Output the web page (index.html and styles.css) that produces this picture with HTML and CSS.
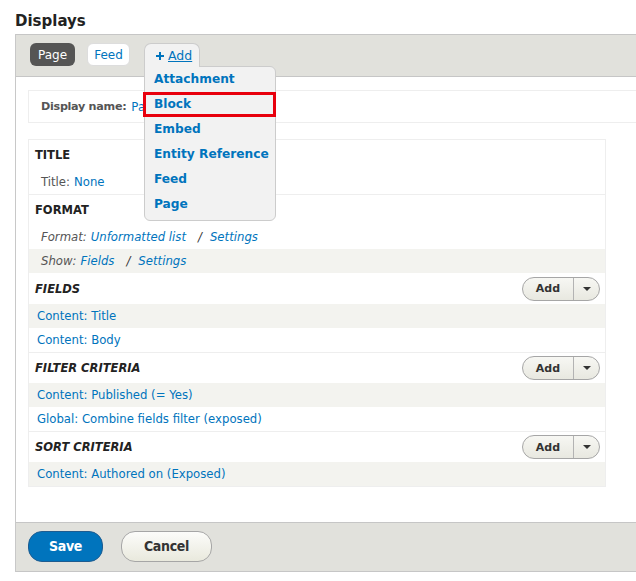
FILE: index.html
```html
<!DOCTYPE html>
<html>
<head>
<meta charset="utf-8">
<link rel="stylesheet" href="styles.css">
</head>
<body>
<h2 class="page-title">Displays</h2>
<div class="panel">
  <div class="tabbar">
    <span class="tab tab-active">Page</span>
    <span class="tab tab-link">Feed</span>
    <div class="add-wrap">
      <span class="tab tab-add"><svg class="plus" viewBox="0 0 8 8" width="8" height="8"><path d="M3 0h2v3h3v2H5v3H3V5H0V3h3z" fill="#0074bd"/></svg><span class="add-text">Add</span></span>
      <ul class="add-menu">
        <li>Attachment</li>
        <li class="selected">Block</li>
        <li>Embed</li>
        <li>Entity Reference</li>
        <li>Feed</li>
        <li>Page</li>
      </ul>
    </div>
  </div>
  <div class="content">
    <div class="display-name"><span class="dn-label">Display name:</span> <span class="link">Page</span></div>
    <div class="bucket-box">
      <div class="bucket">
        <div class="bucket-head"><h3 class="h-up">TITLE</h3></div>
        <div class="row"><span class="lbl">Title:</span> <span class="link">None</span></div>
      </div>
      <div class="bucket no-border">
        <div class="bucket-head"><h3 class="h-up">FORMAT</h3></div>
        <div class="row it"><span class="lbl">Format:</span> <span class="link">Unformatted list</span><span class="sep">/</span><span class="link">Settings</span></div>
        <div class="row it odd"><span class="lbl">Show:</span> <span class="link">Fields</span><span class="sep">/</span><span class="link">Settings</span></div>
      </div>
      <div class="bucket">
        <div class="bucket-head tall"><h3 class="h-it">FIELDS</h3>
          <div class="split"><span class="split-main">Add</span><span class="split-arrow"><svg viewBox="0 0 8 4" width="8" height="4"><path d="M0 0h8L4 4z" fill="#333"/></svg></span></div>
        </div>
        <div class="row link-row odd"><span class="link">Content: Title</span></div>
        <div class="row link-row"><span class="link">Content: Body</span></div>
      </div>
      <div class="bucket">
        <div class="bucket-head"><h3 class="h-it">FILTER CRITERIA</h3>
          <div class="split"><span class="split-main">Add</span><span class="split-arrow"><svg viewBox="0 0 8 4" width="8" height="4"><path d="M0 0h8L4 4z" fill="#333"/></svg></span></div>
        </div>
        <div class="row link-row odd"><span class="link">Content: Published (= Yes)</span></div>
        <div class="row link-row"><span class="link">Global: Combine fields filter (exposed)</span></div>
      </div>
      <div class="bucket no-border">
        <div class="bucket-head"><h3 class="h-it">SORT CRITERIA</h3>
          <div class="split"><span class="split-main">Add</span><span class="split-arrow"><svg viewBox="0 0 8 4" width="8" height="4"><path d="M0 0h8L4 4z" fill="#333"/></svg></span></div>
        </div>
        <div class="row link-row odd"><span class="link">Content: Authored on (Exposed)</span></div>
      </div>
    </div>
  </div>
  <div class="footer">
    <span class="btn btn-primary">Save</span>
    <span class="btn btn-default">Cancel</span>
  </div>
</div>
</body>
</html>
```
FILE: styles.css
```css
html, body {
  margin: 0;
  padding: 0;
  background: #fff;
}
body {
  font-family: "DejaVu Sans", sans-serif;
  font-size: 11.7px;
  color: #222;
  width: 636px;
  overflow: hidden;
}
.page-title {
  margin: 0;
  padding: 12px 0 0 15px;
  height: 22px;
  font-size: 15px;
  font-weight: bold;
  color: #222;
  line-height: 18px;
}
.panel {
  margin-left: 15px;
  border-left: 1px solid #c8c8c8;
}
.tabbar {
  background: #e1e1dc;
  border-top: 1px solid #c6c6c6;
  border-bottom: 1px solid #c6c6c6;
  display: flex;
  align-items: flex-start;
  padding: 8px 0 0 14px;
  box-sizing: border-box;
  height: 43px;
  position: relative;
  z-index: 2;
}
.tab {
  display: flex;
  align-items: center;
  height: 23px;
  box-sizing: border-box;
  border-radius: 6px;
  padding: 0 8px;
  font-size: 12px;
}
.tab-active {
  background: #555;
  color: #fff;
  width: 45px;
  justify-content: center;
  margin-right: 12px;
}
.tab-link {
  background: #fff;
  border: 1px solid #ddd;
  color: #0074bd;
  width: 43px;
  justify-content: center;
  margin-right: 14px;
}
.add-wrap {
  position: relative;
}
.tab-add {
  background: #f2f2f2;
  border: 1px solid #ccc;
  border-bottom: none;
  border-radius: 7px 7px 0 0;
  width: 56px;
  height: 24px;
  padding: 0 0 0 11px;
  color: #0074bd;
  position: relative;
  z-index: 3;
}
.plus {
  margin-right: 4px;
}
.add-text {
  text-decoration: underline;
  font-size: 12.5px;
}
.add-menu {
  position: absolute;
  left: 0;
  top: 23px;
  margin: 0;
  padding: 1px 0 3px 0;
  list-style: none;
  width: 132px;
  box-sizing: border-box;
  background: #f2f2f2;
  border: 1px solid #ccc;
  border-radius: 0 6px 6px 6px;
  z-index: 2;
}
.add-menu li {
  height: 25px;
  line-height: 25px;
  padding-left: 9px;
  font-weight: bold;
  font-size: 12.2px;
  color: #0074bd;
  box-sizing: border-box;
  white-space: nowrap;
}
.add-menu li.selected {
  border: 3px solid #e8000d;
  margin-left: -2px;
  margin-right: -1px;
  padding-left: 8px;
  line-height: 19px;
}
.add-menu li:first-child {
  margin-top: -1px;
}
.content {
  background: #fff;
  padding: 13px 0 35px 12px;
}
.display-name {
  height: 33px;
  box-sizing: border-box;
  border-top: 1px solid #eee;
  border-bottom: 1px solid #eee;
  border-left: 1px solid #eee;
  display: flex;
  align-items: center;
  padding-left: 12px;
  color: #555;
  margin-bottom: 16px;
}
.dn-label {
  font-weight: bold;
  font-size: 11.2px;
  letter-spacing: -0.3px;
  margin-right: 5px;
}
.link {
  color: #0074bd;
}
.bucket-box {
  width: 578px;
  box-sizing: border-box;
  border: 1px solid #eee;
}
.bucket {
  border-bottom: 1px solid #eee;
}
.bucket.no-border {
  border-bottom: none;
}
.bucket-head {
  height: 30px;
  display: flex;
  align-items: center;
  justify-content: space-between;
  padding: 0 5px 0 6px;
}
.bucket-head.tall {
  height: 31px;
}
.bucket-head h3 {
  margin: 0;
  font-size: 11.5px;
  font-weight: bold;
  color: #222;
}
.h-it {
  font-style: italic;
}
.row {
  height: 24px;
  display: flex;
  align-items: center;
  padding-left: 12px;
  padding-bottom: 1px;
  box-sizing: border-box;
  color: #555;
}
.row.it {
  font-style: italic;
}
.row.odd {
  background: #f3f3ef;
}
.link-row {
  padding-left: 8px;
}
.lbl {
  margin-right: 4px;
}
.sep {
  color: #333;
  margin: 0 8px 0 12px;
}
.split {
  display: flex;
  height: 24px;
  box-sizing: border-box;
  border: 1px solid #a6a6a6;
  border-radius: 12px;
  background: linear-gradient(#f7f7f3, #e8e8e0);
  width: 78px;
}
.split-main {
  width: 50px;
  display: flex;
  align-items: center;
  justify-content: center;
  font-weight: bold;
  font-size: 11px;
  color: #333;
  border-right: 1px solid #b3b3b3;
}
.split-arrow {
  flex: 1;
  display: flex;
  align-items: center;
  justify-content: center;
}
.footer {
  height: 50px;
  box-sizing: border-box;
  background: #e1e1dc;
  border-top: 1px solid #c6c6c6;
  border-bottom: 1px solid #c6c6c6;
  display: flex;
  align-items: center;
  padding-left: 12px;
  padding-bottom: 2px;
}
.btn {
  display: flex;
  align-items: center;
  justify-content: center;
  height: 31px;
  box-sizing: border-box;
  border-radius: 14px;
  font-family: "DejaVu Sans Condensed", "DejaVu Sans", sans-serif;
  font-stretch: condensed;
  font-weight: bold;
  font-size: 14px;
  letter-spacing: -0.3px;
}
.btn-primary {
  width: 75px;
  background: #0074bd;
  border: 1px solid #1e5c90;
  color: #fff;
  margin-right: 18px;
}
.btn-default {
  width: 91px;
  background: linear-gradient(#fcfcfa, #e9e9dd);
  border: 1px solid #a6a6a6;
  color: #333;
}
```
